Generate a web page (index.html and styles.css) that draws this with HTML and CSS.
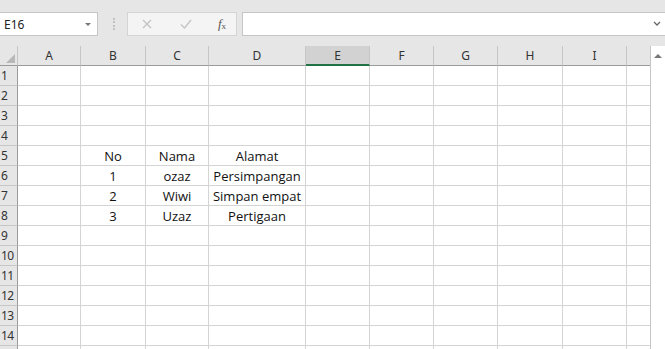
FILE: index.html
```html
<!DOCTYPE html>
<html>
<head>
<meta charset="utf-8">
<link rel="stylesheet" href="styles.css">
</head>
<body>
<div class="app">
  <div class="toolbar">
    <div class="namebox"><span class="nb-text">E16</span><span class="nb-arrow"></span></div>
    <div class="sep"></div>
    <div class="fnbox">
      <svg class="ico" width="14" height="14" viewBox="0 0 14 14"><path d="M3 3 L11 11 M11 3 L3 11" stroke="#c4c4c4" stroke-width="1.4" fill="none"/></svg>
      <svg class="ico" width="14" height="14" viewBox="0 0 14 14"><path d="M2 7.5 L5.5 11 L12 3" stroke="#c4c4c4" stroke-width="1.4" fill="none"/></svg>
      <span class="fx"><i>f</i><sub>x</sub></span>
    </div>
    <div class="formula"><svg class="chev" width="10" height="8" viewBox="0 0 10 8"><path d="M2 2 L5 5 L8 2" stroke="#666" stroke-width="1.3" fill="none"/></svg></div>
  </div>
  <div class="sheet">
    <div class="grid">
      <div class="corner"><span class="tri"></span></div>
      <div class="ch">A</div><div class="ch">B</div><div class="ch">C</div><div class="ch">D</div><div class="ch sel">E</div><div class="ch">F</div><div class="ch">G</div><div class="ch">H</div><div class="ch">I</div><div class="ch"></div>

      <div class="rh">1</div><div class="c"></div><div class="c"></div><div class="c"></div><div class="c"></div><div class="c"></div><div class="c"></div><div class="c"></div><div class="c"></div><div class="c"></div><div class="c"></div>
      <div class="rh">2</div><div class="c"></div><div class="c"></div><div class="c"></div><div class="c"></div><div class="c"></div><div class="c"></div><div class="c"></div><div class="c"></div><div class="c"></div><div class="c"></div>
      <div class="rh">3</div><div class="c"></div><div class="c"></div><div class="c"></div><div class="c"></div><div class="c"></div><div class="c"></div><div class="c"></div><div class="c"></div><div class="c"></div><div class="c"></div>
      <div class="rh">4</div><div class="c"></div><div class="c"></div><div class="c"></div><div class="c"></div><div class="c"></div><div class="c"></div><div class="c"></div><div class="c"></div><div class="c"></div><div class="c"></div>
      <div class="rh">5</div><div class="c"></div><div class="c">No</div><div class="c">Nama</div><div class="c">Alamat</div><div class="c"></div><div class="c"></div><div class="c"></div><div class="c"></div><div class="c"></div><div class="c"></div>
      <div class="rh">6</div><div class="c"></div><div class="c">1</div><div class="c">ozaz</div><div class="c">Persimpangan</div><div class="c"></div><div class="c"></div><div class="c"></div><div class="c"></div><div class="c"></div><div class="c"></div>
      <div class="rh">7</div><div class="c"></div><div class="c">2</div><div class="c">Wiwi</div><div class="c">Simpan empat</div><div class="c"></div><div class="c"></div><div class="c"></div><div class="c"></div><div class="c"></div><div class="c"></div>
      <div class="rh">8</div><div class="c"></div><div class="c">3</div><div class="c">Uzaz</div><div class="c">Pertigaan</div><div class="c"></div><div class="c"></div><div class="c"></div><div class="c"></div><div class="c"></div><div class="c"></div>
      <div class="rh">9</div><div class="c"></div><div class="c"></div><div class="c"></div><div class="c"></div><div class="c"></div><div class="c"></div><div class="c"></div><div class="c"></div><div class="c"></div><div class="c"></div>
      <div class="rh">10</div><div class="c"></div><div class="c"></div><div class="c"></div><div class="c"></div><div class="c"></div><div class="c"></div><div class="c"></div><div class="c"></div><div class="c"></div><div class="c"></div>
      <div class="rh">11</div><div class="c"></div><div class="c"></div><div class="c"></div><div class="c"></div><div class="c"></div><div class="c"></div><div class="c"></div><div class="c"></div><div class="c"></div><div class="c"></div>
      <div class="rh">12</div><div class="c"></div><div class="c"></div><div class="c"></div><div class="c"></div><div class="c"></div><div class="c"></div><div class="c"></div><div class="c"></div><div class="c"></div><div class="c"></div>
      <div class="rh">13</div><div class="c"></div><div class="c"></div><div class="c"></div><div class="c"></div><div class="c"></div><div class="c"></div><div class="c"></div><div class="c"></div><div class="c"></div><div class="c"></div>
      <div class="rh">14</div><div class="c"></div><div class="c"></div><div class="c"></div><div class="c"></div><div class="c"></div><div class="c"></div><div class="c"></div><div class="c"></div><div class="c"></div><div class="c"></div>
      <div class="rh"></div><div class="c"></div><div class="c"></div><div class="c"></div><div class="c"></div><div class="c"></div><div class="c"></div><div class="c"></div><div class="c"></div><div class="c"></div><div class="c"></div>
    </div>
    <div class="vscroll"><span class="up"></span></div>
  </div>
</div>
</body>
</html>
```
FILE: styles.css
```css
html, body { margin: 0; padding: 0; }
body { width: 665px; height: 349px; overflow: hidden; background: #fff; font-family: "Open Sans", "Noto Sans", sans-serif; }
.app { width: 665px; height: 349px; display: flex; flex-direction: column; }

.toolbar { height: 46px; background: #e6e6e6; display: flex; align-items: flex-start; padding-top: 12px; box-sizing: border-box; flex: none; }
.namebox { width: 98px; height: 24px; box-sizing: border-box; background: #fff; border: 1px solid #c6c6c6; border-left: none; display: flex; align-items: center; justify-content: space-between; padding: 0 6px 0 4px; }
.nb-text { font-size: 12px; color: #222; font-family: "Noto Sans", sans-serif; }
.nb-arrow { width: 0; height: 0; border-left: 3px solid transparent; border-right: 3px solid transparent; border-top: 3px solid #777; }
.sep { width: 1px; height: 12px; margin: 6px 0 0 15px; border-left: 2px dotted #c2c2c2; }
.fnbox { margin-left: 11px; width: 110px; height: 24px; box-sizing: border-box; background: #f4f4f4; border: 1px solid #d4d4d4; display: flex; align-items: center; justify-content: space-between; padding: 0 10px 0 12px; }
.fx { font-family: "Liberation Serif", serif; font-size: 13px; color: #555; line-height: 1; }
.fx sub { font-size: 9px; vertical-align: -1px; }
.formula { margin-left: 5px; flex: 1; height: 24px; box-sizing: border-box; background: #fff; border: 1px solid #c6c6c6; border-right: none; display: flex; align-items: center; justify-content: flex-end; padding-right: 3px; }

.sheet { flex: 1; display: flex; overflow: hidden; }
.grid { display: grid; grid-template-columns: 18px 63px 65px 63px 97px 64px 64px 64px 65px 64px 24px; grid-auto-rows: 20px; grid-template-rows: 20px; align-content: start; width: 651px; overflow: hidden; }
.corner { background: #e6e6e6; border-right: 1px solid #c6c6c6; border-bottom: 1px solid #9b9b9b; position: relative; box-sizing: border-box; }
.tri { position: absolute; right: 2px; bottom: 2px; width: 0; height: 0; border-left: 9px solid transparent; border-bottom: 9px solid #b8b8b8; }
.ch { background: #e6e6e6; border-right: 1px solid #c6c6c6; border-bottom: 1px solid #9b9b9b; box-sizing: border-box; display: flex; align-items: center; justify-content: center; font-family: "Noto Sans", sans-serif; font-size: 12px; color: #333; }
.ch.sel { background: #d2d2d2; border-bottom: 2px solid #217346; color: #333; }
.rh { background: #e6e6e6; border-right: 1px solid #9b9b9b; border-bottom: 1px solid #c6c6c6; box-sizing: border-box; display: flex; align-items: center; justify-content: flex-start; padding-left: 1px; font-family: "Noto Sans", sans-serif; font-size: 12px; color: #333; letter-spacing: -0.5px; }
.c { border-right: 1px solid #d4d4d4; border-bottom: 1px solid #d4d4d4; box-sizing: border-box; display: flex; align-items: center; justify-content: center; font-family: "Open Sans", sans-serif; font-size: 13px; color: #111; white-space: nowrap; }

.vscroll { width: 14px; flex: none; border-left: 1px solid #c6c6c6; background: #fff; position: relative; margin-top: 0; }
.up { position: absolute; left: 3px; top: 8px; width: 0; height: 0; border-left: 4px solid transparent; border-right: 4px solid transparent; border-bottom: 4px solid #777; }
```
